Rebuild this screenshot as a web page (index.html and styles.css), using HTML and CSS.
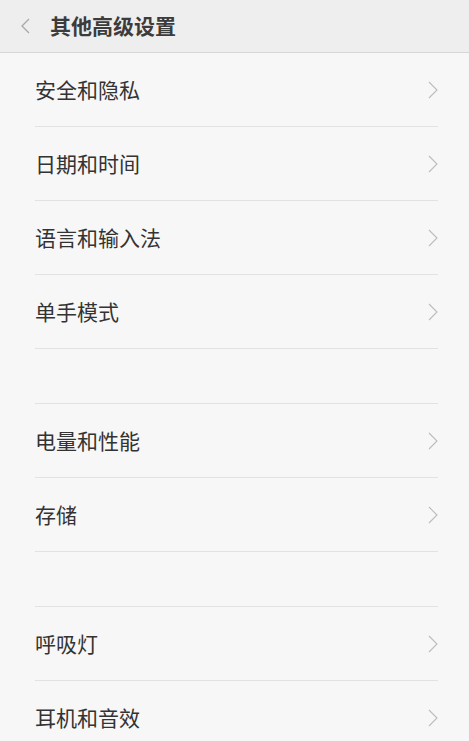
FILE: index.html
```html
<!DOCTYPE html>
<html lang="zh">
<head>
<meta charset="utf-8">
<link rel="stylesheet" href="styles.css">
</head>
<body>
<header class="topbar">
  <svg class="back" width="10" height="16" viewBox="0 0 10 16"><path d="M9 1 L2 8 L9 15" fill="none" stroke="#a8a8a8" stroke-width="1.3"/></svg>
  <h1 class="title">其他高级设置</h1>
</header>
<main class="content">
  <ul class="group first">
    <li class="row"><span class="label">安全和隐私</span><svg class="chev" width="10" height="18" viewBox="0 0 10 18"><path d="M1 1 L9 9 L1 17" fill="none" stroke="#bcbcbc" stroke-width="1.1"/></svg></li>
    <li class="row"><span class="label">日期和时间</span><svg class="chev" width="10" height="18" viewBox="0 0 10 18"><path d="M1 1 L9 9 L1 17" fill="none" stroke="#bcbcbc" stroke-width="1.1"/></svg></li>
    <li class="row"><span class="label">语言和输入法</span><svg class="chev" width="10" height="18" viewBox="0 0 10 18"><path d="M1 1 L9 9 L1 17" fill="none" stroke="#bcbcbc" stroke-width="1.1"/></svg></li>
    <li class="row"><span class="label">单手模式</span><svg class="chev" width="10" height="18" viewBox="0 0 10 18"><path d="M1 1 L9 9 L1 17" fill="none" stroke="#bcbcbc" stroke-width="1.1"/></svg></li>
  </ul>
  <ul class="group">
    <li class="row"><span class="label">电量和性能</span><svg class="chev" width="10" height="18" viewBox="0 0 10 18"><path d="M1 1 L9 9 L1 17" fill="none" stroke="#bcbcbc" stroke-width="1.1"/></svg></li>
    <li class="row"><span class="label">存储</span><svg class="chev" width="10" height="18" viewBox="0 0 10 18"><path d="M1 1 L9 9 L1 17" fill="none" stroke="#bcbcbc" stroke-width="1.1"/></svg></li>
  </ul>
  <ul class="group">
    <li class="row"><span class="label">呼吸灯</span><svg class="chev" width="10" height="18" viewBox="0 0 10 18"><path d="M1 1 L9 9 L1 17" fill="none" stroke="#bcbcbc" stroke-width="1.1"/></svg></li>
    <li class="row"><span class="label">耳机和音效</span><svg class="chev" width="10" height="18" viewBox="0 0 10 18"><path d="M1 1 L9 9 L1 17" fill="none" stroke="#bcbcbc" stroke-width="1.1"/></svg></li>
  </ul>
</main>
</body>
</html>
```
FILE: styles.css
```css
* { box-sizing: border-box; }
html, body {
  margin: 0;
  padding: 0;
  background: #f7f7f7;
  font-family: "Noto Sans CJK SC", "Noto Sans", sans-serif;
  overflow: hidden;
}
.topbar {
  height: 53px;
  background: #eeeeee;
  border-bottom: 1px solid #d6d6d6;
  display: flex;
  align-items: center;
  padding-left: 20px;
  padding-bottom: 1px;
}
.back { display: block; flex: none; }
.title {
  margin: 0 0 0 20px;
  font-size: 21px;
  font-weight: 700;
  color: #3c3c3c;
  line-height: 1;
}
.content { padding: 0 31px 0 35px; }
.group {
  list-style: none;
  margin: 54px 0 0 0;
  padding: 0;
  border-top: 1px solid #e2e2e2;
}
.group.first { margin-top: 0; border-top: none; }
.row {
  height: 74px;
  border-bottom: 1px solid #e2e2e2;
  display: flex;
  align-items: center;
  justify-content: space-between;
}
.label {
  font-size: 21px;
  color: #333333;
  line-height: 1;
}
.chev { display: block; flex: none; }
```
